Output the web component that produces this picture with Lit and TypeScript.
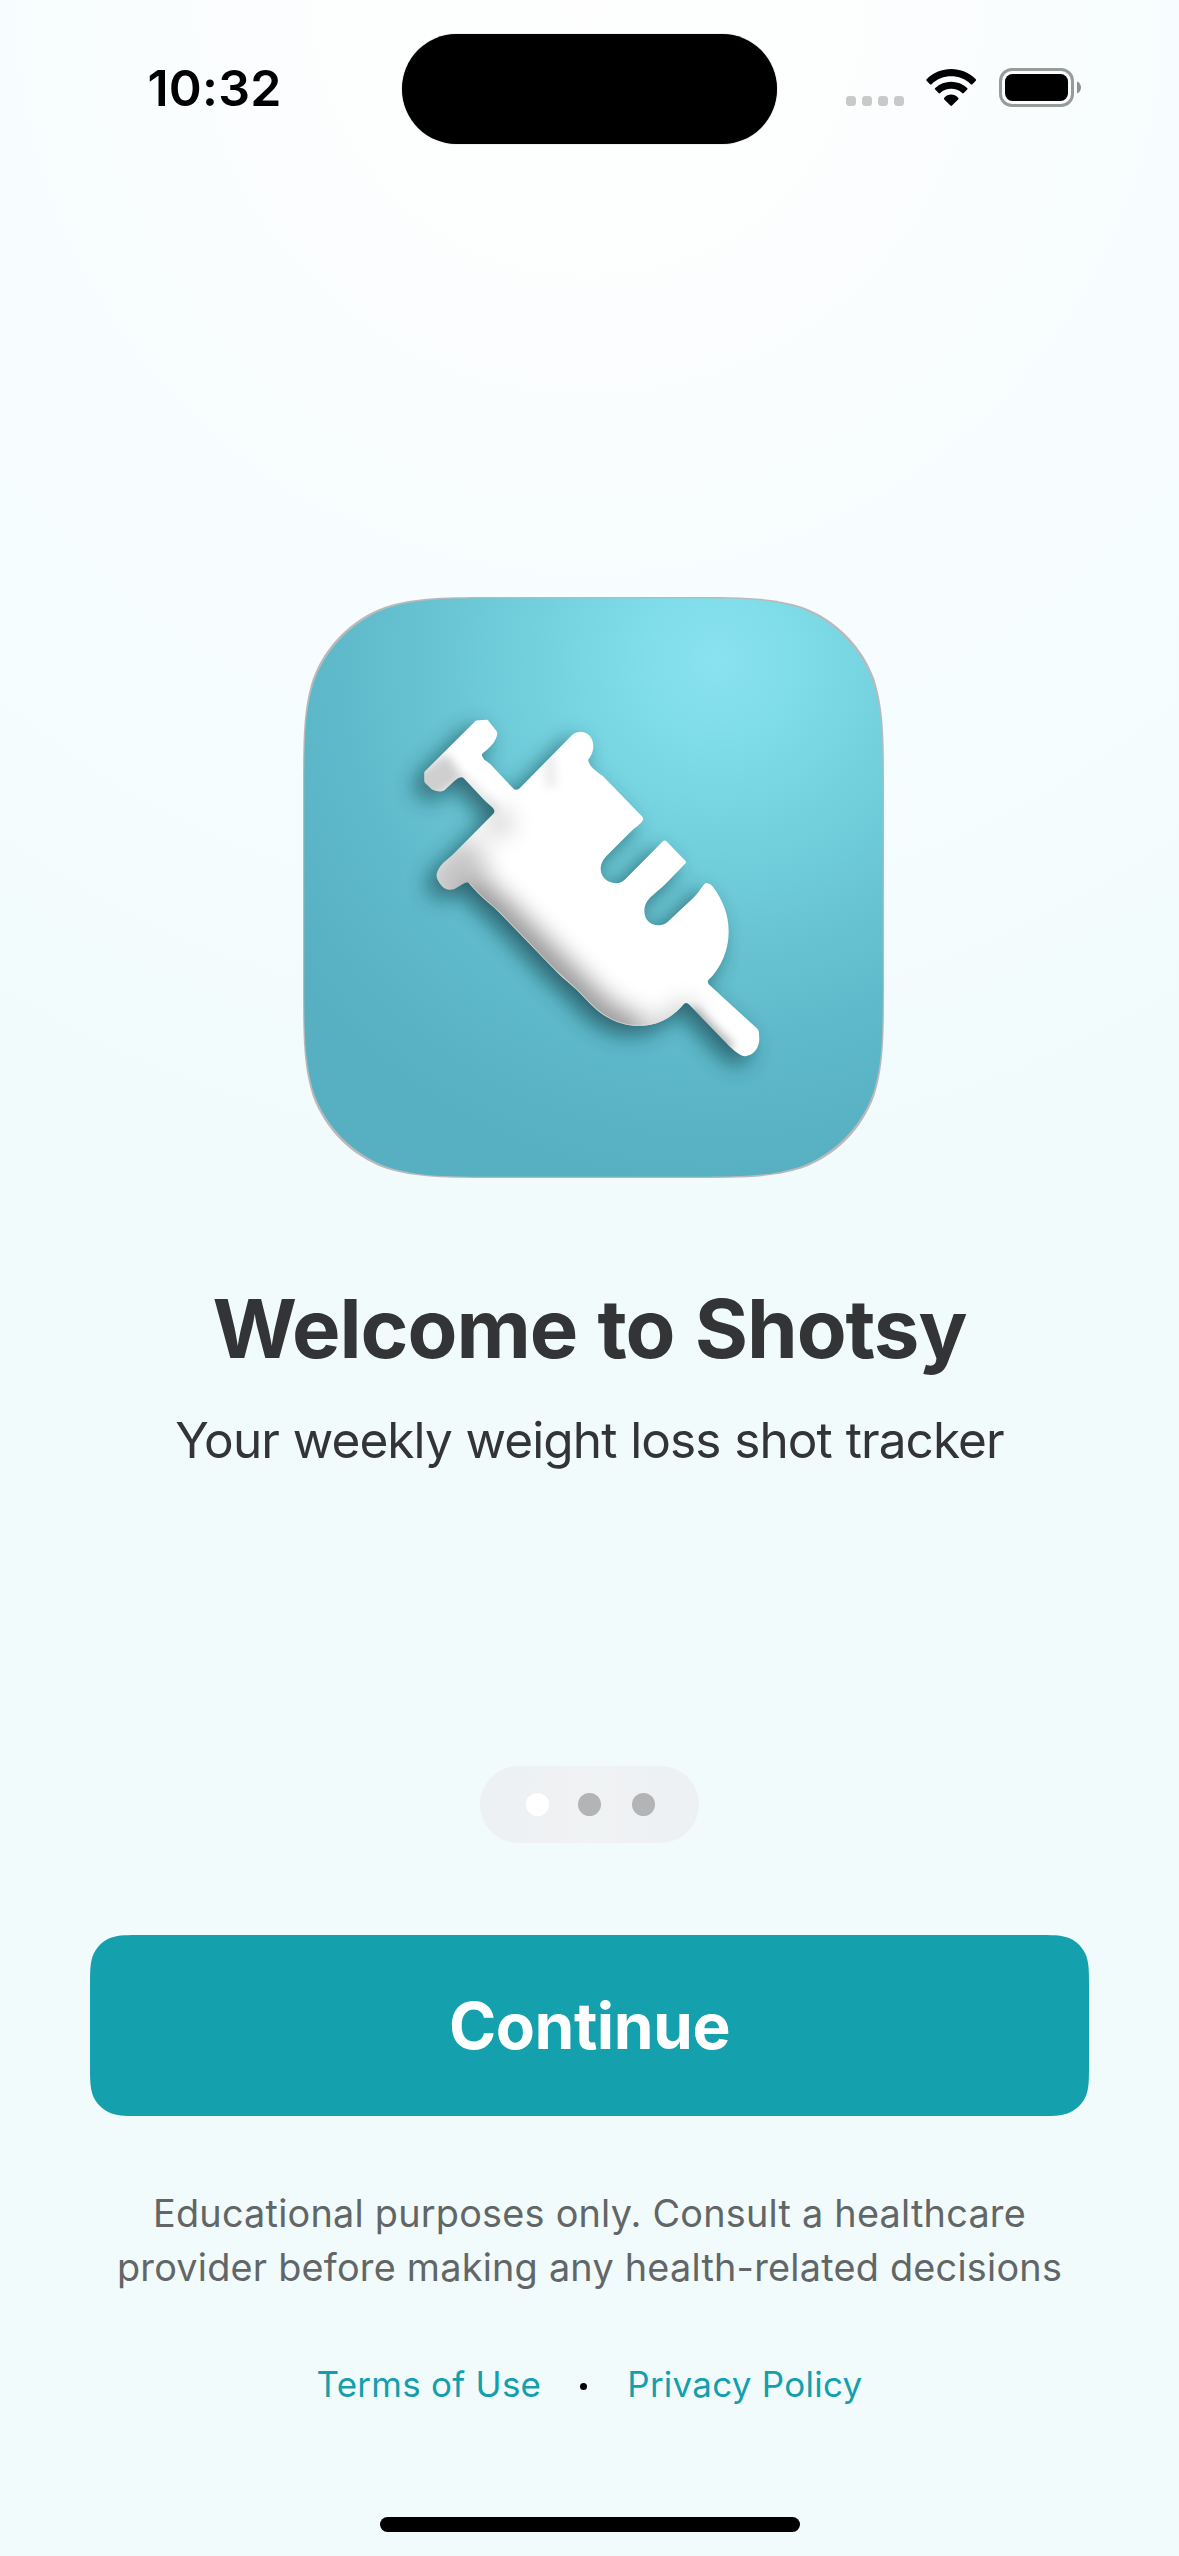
import { LitElement, html, css, svg, unsafeCSS } from "lit";
import { customElement, property } from "lit/decorators.js";

/** Rounded rectangle with continuous-curvature corners. */
function squircle(w: number, h: number, r: number, x = 0, y = 0): string {
  const a = 1.52866498 * r;
  const b = 1.08849296 * r;
  const c = 0.86840694 * r;
  const d = 0.63149379 * r;
  const e = 0.07491139 * r;
  const f = 0.37282383 * r;
  const g = 0.16905956 * r;
  const R = x + w;
  const B = y + h;
  return [
    `M${x + a} ${y}L${R - a} ${y}`,
    `C${R - b} ${y} ${R - c} ${y} ${R - d} ${y + e}`,
    `C${R - f} ${y + g} ${R - g} ${y + f} ${R - e} ${y + d}`,
    `C${R} ${y + c} ${R} ${y + b} ${R} ${y + a}`,
    `L${R} ${B - a}`,
    `C${R} ${B - b} ${R} ${B - c} ${R - e} ${B - d}`,
    `C${R - g} ${B - f} ${R - f} ${B - g} ${R - d} ${B - e}`,
    `C${R - c} ${B} ${R - b} ${B} ${R - a} ${B}`,
    `L${x + a} ${B}`,
    `C${x + b} ${B} ${x + c} ${B} ${x + d} ${B - e}`,
    `C${x + f} ${B - g} ${x + g} ${B - f} ${x + e} ${B - d}`,
    `C${x} ${B - c} ${x} ${B - b} ${x} ${B - a}`,
    `L${x} ${y + a}`,
    `C${x} ${y + b} ${x} ${y + c} ${x + e} ${y + d}`,
    `C${x + g} ${y + f} ${x + f} ${y + g} ${x + d} ${y + e}`,
    `C${x + c} ${y} ${x + b} ${y} ${x + a} ${y}Z`,
  ].join("");
}

const SYRINGE =
  "M228 90L260 88Q264 88 266 92L290 122Q293 128 291 135C286 153 274 168 250 187Q243 191 247 198Q251 208 262 214L272 222L338 292Q341 298 347 298Q354 298 359 293L508 142Q522 124 542 124C568 125 580 146 580 168Q580 186 568 203Q562 209 567 216C573 232 590 243 608 256L727 379Q732 384 728 390Q724 399 712 407Q702 413 690 426L618 498Q602 516 602 535C602 560 622 578 648 578Q664 578 675 567L788 453Q794 447 800 453L856 511Q860 515 856 519L800 577Q788 590 765 608L750 622Q733 640 733 660C733 688 750 704 776 704Q793 704 805 692L882 620Q897 604 910 584Q915 577 922 578Q931 579 938 588C970 630 986 675 986 722C986 778 965 830 926 868Q921 874 926 881L1072 1015Q1077 1020 1077 1030L1078 1048C1076 1075 1060 1095 1036 1097Q1026 1098 1005 1082L988 1067L868 943Q861 934 852 940C815 985 770 1006 716 1006C662 1006 612 982 572 941L530 898Q515 884 490 863Q475 850 460 834L300 668Q285 653 262 634Q240 616 208 580Q204 572 196 577Q188 580 180 586Q165 597 151 598Q135 598 125 586Q108 565 110 552Q113 535 130 517L158 493L280 370Q285 364 282 358Q279 351 270 344Q258 335 240 315L192 264Q187 258 180 261Q172 262 155 279L135 298Q130 303 121 303Q108 303 96 297L76 278Q73 275 73 270L73 246Q73 243 78 239Z";

@customElement("status-bar")
class StatusBar extends LitElement {
  static styles = css`
    :host {
      display: grid;
      grid-template-columns: 402px 375px 402px;
      align-items: center;
      height: 178px;
    }
    .time {
      box-sizing: border-box;
      padding: 0 0 2px 27px;
      text-align: center;
      font-weight: 600;
      font-size: 50px;
      line-height: 60px;
      letter-spacing: 0.2px;
      color: #000;
    }
    .island {
      height: 110px;
      border-radius: 55px;
      background: #000;
      box-shadow: 0 0 1px rgba(0, 0, 0, 0.6);
    }
    .icons {
      display: flex;
      gap: 22.4px;
      padding: 0 0 3px 69px;
    }
    svg {
      display: block;
      overflow: visible;
    }
  `;
  render() {
    return html`
      <div class="time">10:32</div>
      <div class="island"></div>
      <div class="icons">
        <svg width="58" height="39" viewBox="0 0 58 39" fill="#c8cac9">
          ${[0, 16, 32, 48].map((x) => svg`<rect x=${x} y="28" width="10" height="10" rx="3.4" />`)}
        </svg>
        <svg width="50.2" height="39" viewBox="0 -1 50.2 39" fill="#000">
          <path d="M.6 10.2C14-3.4 36.4-3.4 49.8 10.2Q50.6 11 49.8 11.8L46.4 15.2Q45.6 16 44.8 15.2C34 4.6 16.4 4.6 5.6 15.2Q4.8 16 4 15.2L.6 11.8Q-.2 11 .6 10.2Z" />
          <path d="M9.2 19C18 10.6 32.4 10.6 41.2 19Q42 19.8 41.2 20.6L37.8 24Q37 24.8 36.2 24C30 18.4 20.4 18.4 14.2 24Q13.4 24.8 12.6 24L9.2 20.6Q8.4 19.8 9.2 19Z" />
          <path d="M18.3 28.8C22 24.4 28.4 24.4 32.1 28.8Q33 29.8 32.1 30.6L26 36.6Q25.2 37.3 24.4 36.6L18.3 30.6Q17.4 29.8 18.3 28.8Z" />
        </svg>
        <svg width="82" height="39" viewBox="0 0 82 39">
          <rect x="1.5" y="1.5" width="72" height="36" rx="11.5" fill="none" stroke="#999b9b" stroke-width="3" />
          <rect x="6" y="6" width="63" height="27" rx="7.5" />
          <path d="M78 13.5C80.8 14.6 82 17 82 19.5S80.8 24.4 78 25.5Z" fill="#8f9191" />
        </svg>
      </div>
    `;
  }
}

@customElement("app-badge")
class AppBadge extends LitElement {
  static styles = css`
    :host {
      display: block;
      width: 581px;
      height: 581px;
    }
    svg {
      display: block;
      overflow: visible;
    }
  `;
  render() {
    return html`
      <svg width="581" height="581" viewBox="303 596.5 581 581">
        <defs>
          <radialGradient id="tile" gradientUnits="userSpaceOnUse" cx="716" cy="660" r="520">
            <stop offset="0" stop-color="#89e2ef" />
            <stop offset=".15" stop-color="#7fdde9" />
            <stop offset=".38" stop-color="#71cfdc" />
            <stop offset=".58" stop-color="#66c1d0" />
            <stop offset=".76" stop-color="#5db8c9" />
            <stop offset="1" stop-color="#56b0c2" />
          </radialGradient>
          <filter id="cast" filterUnits="userSpaceOnUse" x="-100" y="-60" width="1340" height="1340">
            <feGaussianBlur stdDeviation="34" />
          </filter>
          <filter id="soft" filterUnits="userSpaceOnUse" x="-60" y="-40" width="1260" height="1260">
            <feGaussianBlur stdDeviation="36" />
          </filter>
          <filter id="fine" filterUnits="userSpaceOnUse" x="-60" y="-40" width="1260" height="1260">
            <feGaussianBlur stdDeviation="14" />
          </filter>
          <clipPath id="body"><path d=${SYRINGE} /></clipPath>
        </defs>
        <path d=${squircle(581, 581, 130, 303, 596.5)} fill="#b9b9bb" />
        <path d=${squircle(578.6, 578.6, 132, 304.2, 597.7)} fill="url(#tile)" />
        <g transform="translate(400 690) scale(.333333)">
          <path d=${SYRINGE} transform="translate(-27 25)" fill="#07363d" opacity=".66" filter="url(#cast)" />
          <path d=${SYRINGE} fill="#fff" />
          <g clip-path="url(#body)" fill="none" stroke="#000">
            <path d="M190 590L300 690L470 860L560 950C610 1000 660 1030 720 1030" stroke-width="120" opacity=".4" filter="url(#soft)" />
            <path d="M90 610L230 470" stroke-width="120" opacity=".22" filter="url(#soft)" />
            <path d="M260 400L330 395" stroke-width="70" opacity=".2" filter="url(#soft)" />
            <path d="M720 1040Q820 1020 880 950" stroke-width="80" opacity=".18" filter="url(#soft)" />
            <path d="M60 300L165 225" stroke-width="90" opacity=".19" filter="url(#fine)" />
            <path d="M190 262L290 362" stroke-width="22" opacity=".12" filter="url(#fine)" />
            <path d="M870 960L990 1078" stroke-width="38" opacity=".3" filter="url(#fine)" />
            <path d="M446 190L454 290" stroke-width="36" opacity=".07" filter="url(#fine)" />
            <path d="M208 580Q240 616 262 634L300 668L460 834L530 898L572 941C612 982 662 1006 716 1006C770 1006 815 985 852 940" stroke="#e9dfe1" stroke-width="5" opacity=".7" />
          </g>
        </g>
      </svg>
    `;
  }
}

@customElement("page-dots")
class PageDots extends LitElement {
  @property({ type: Number }) count = 3;
  @property({ type: Number }) current = 0;
  static styles = css`
    :host {
      box-sizing: border-box;
      display: flex;
      align-items: center;
      gap: 29px;
      width: 219px;
      height: 77px;
      padding-left: 46px;
      border-radius: 38.5px;
      background: linear-gradient(90deg, #edf1f3, #f0f2f3 50%, #edf1f3);
    }
    .dot {
      width: 23px;
      height: 23px;
      border-radius: 50%;
      background: #b2b4b6;
    }
    .dot:last-of-type {
      margin-left: 2px;
    }
    .on {
      background: #fff;
    }
  `;
  render() {
    return Array.from(
      { length: this.count },
      (_, i) => html`<span class=${i === this.current ? "dot on" : "dot"}></span>`
    );
  }
}

@customElement("app-root")
class AppRoot extends LitElement {
  static styles = css`
    :host {
      box-sizing: border-box;
      display: flex;
      flex-direction: column;
      align-items: center;
      width: 1179px;
      height: 2556px;
      padding-bottom: 24px;
      overflow: hidden;
      font-family: Inter, "Liberation Sans", sans-serif;
      background: radial-gradient(circle 1250px at 50% 0, #fefefe 0, #fdfefe 20%, #f7fdfe 50%, #f1fbfc 100%);
    }
    status-bar {
      width: 100%;
    }
    .badge {
      padding: 418.5px 0 0 8px;
    }
    .title {
      margin: 101px 0 0;
      font-weight: 700;
      font-size: 81.5px;
      line-height: 100px;
      letter-spacing: -1.05px;
      word-spacing: 2px;
      color: #333436;
      white-space: nowrap;
    }
    .subtitle {
      margin: 30px 0 0;
      font-size: 49.5px;
      line-height: 62px;
      letter-spacing: -0.9px;
      word-spacing: 0.7px;
      color: #333436;
      white-space: nowrap;
    }
    page-dots {
      margin-top: 295.5px;
    }
    .continue {
      width: 999px;
      height: 181px;
      margin: 92px 0 0;
      padding: 0;
      border: 0;
      background: #14a0ad;
      clip-path: path("${unsafeCSS(squircle(999, 181, 34))}");
      color: #fff;
      font-family: inherit;
      font-weight: 700;
      font-size: 64px;
      line-height: 181px;
      letter-spacing: -0.5px;
    }
    .note {
      margin: 69.5px 0 0;
      font-size: 37.8px;
      line-height: 54px;
      letter-spacing: 0.24px;
      text-align: center;
      color: #626667;
      white-space: nowrap;
    }
    .links {
      display: flex;
      align-items: center;
      margin-top: 66px;
      font-size: 35px;
      line-height: 48px;
      letter-spacing: 0.25px;
    }
    .link {
      color: #149fac;
      text-decoration: none;
    }
    .sep {
      width: 7px;
      height: 7px;
      margin: 5px 40px 0 39px;
      border-radius: 50%;
      background: #000;
    }
    .home {
      width: 420px;
      height: 15px;
      margin: auto 0 0 1px;
      border-radius: 7.5px;
      background: #000;
    }
  `;
  render() {
    return html`
      <status-bar></status-bar>
      <div class="badge"><app-badge></app-badge></div>
      <h1 class="title">Welcome to Shotsy</h1>
      <p class="subtitle">Your weekly weight loss shot tracker</p>
      <page-dots count="3" current="0"></page-dots>
      <button class="continue">Continue</button>
      <p class="note">
        Educational purposes only. Consult a healthcare<br />provider before making any health-related decisions
      </p>
      <nav class="links">
        <a class="link">Terms of Use</a>
        <span class="sep"></span>
        <a class="link">Privacy Policy</a>
      </nav>
      <div class="home"></div>
    `;
  }
}
